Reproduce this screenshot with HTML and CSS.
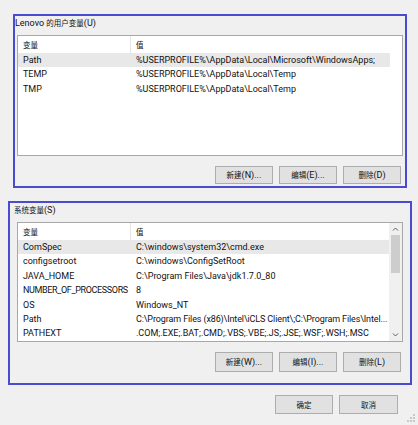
FILE: index.html
```html
<!DOCTYPE html>
<html lang="zh-CN">
<head>
<meta charset="utf-8">
<title>环境变量</title>
<link rel="stylesheet" href="styles.css">
</head>
<body>
<div class="win">
  <section class="grp grp-user">
    <div class="grp-title">Lenovo <span class="zh">的用户变量</span>(U)</div>
    <div class="list list-user">
      <div class="lv-body">
        <div class="lv-head"><span class="c1 zh">变量</span><span class="c2 zh">值</span></div>
        <div class="lv-row sel"><span class="c1">Path</span><span class="c2">%USERPROFILE%\AppData\Local\Microsoft\WindowsApps;</span></div>
        <div class="lv-row"><span class="c1">TEMP</span><span class="c2">%USERPROFILE%\AppData\Local\Temp</span></div>
        <div class="lv-row"><span class="c1">TMP</span><span class="c2">%USERPROFILE%\AppData\Local\Temp</span></div>
      </div>
    </div>
    <div class="btns">
      <button class="btn"><span class="zh">新建</span>(N)...</button>
      <button class="btn"><span class="zh">编辑</span>(E)...</button>
      <button class="btn"><span class="zh">删除</span>(D)</button>
    </div>
  </section>

  <section class="grp grp-sys">
    <div class="grp-title"><span class="zh">系统变量</span>(S)</div>
    <div class="list list-sys">
      <div class="lv-body">
        <div class="lv-head"><span class="c1 zh">变量</span><span class="c2 zh">值</span></div>
        <div class="lv-row sel"><span class="c1">ComSpec</span><span class="c2">C:\windows\system32\cmd.exe</span></div>
        <div class="lv-row"><span class="c1">configsetroot</span><span class="c2">C:\windows\ConfigSetRoot</span></div>
        <div class="lv-row"><span class="c1">JAVA_HOME</span><span class="c2">C:\Program Files\Java\jdk1.7.0_80</span></div>
        <div class="lv-row"><span class="c1 caps">NUMBER_OF_PROCESSORS</span><span class="c2">8</span></div>
        <div class="lv-row"><span class="c1">OS</span><span class="c2">Windows_NT</span></div>
        <div class="lv-row"><span class="c1">Path</span><span class="c2 tight">C:\Program Files (x86)\Intel\iCLS Client\;C:\Program Files\Intel...</span></div>
        <div class="lv-row"><span class="c1">PATHEXT</span><span class="c2">.COM;.EXE;.BAT;.CMD;.VBS;.VBE;.JS;.JSE;.WSF;.WSH;.MSC</span></div>
      </div>
      <div class="vscroll">
        <svg class="arrow" width="13" height="12" viewBox="0 0 13 12"><path d="M4 7.5 L6.5 5 L9 7.5" fill="none" stroke="#606060" stroke-width="1"/></svg>
        <div class="track"><div class="thumb"></div></div>
        <svg class="arrow" width="13" height="12" viewBox="0 0 13 12"><path d="M4 4.5 L6.5 7 L9 4.5" fill="none" stroke="#606060" stroke-width="1"/></svg>
      </div>
    </div>
    <div class="btns">
      <button class="btn btn-tall"><span class="zh">新建</span>(W)...</button>
      <button class="btn btn-tall"><span class="zh">编辑</span>(I)...</button>
      <button class="btn btn-tall"><span class="zh">删除</span>(L)</button>
    </div>
  </section>

  <div class="footer">
    <button class="btn btn-ok"><span class="zh">确定</span></button>
    <button class="btn btn-ok btn-cancel"><span class="zh">取消</span></button>
    <svg class="grip" width="8" height="8" viewBox="0 0 8 8">
      <rect x="6" y="0" width="2" height="2" fill="#c8c8c8"/>
      <rect x="3" y="3" width="2" height="2" fill="#c8c8c8"/>
      <rect x="6" y="3" width="2" height="2" fill="#c8c8c8"/>
      <rect x="0" y="6" width="2" height="2" fill="#c8c8c8"/>
      <rect x="3" y="6" width="2" height="2" fill="#c8c8c8"/>
      <rect x="6" y="6" width="2" height="2" fill="#c8c8c8"/>
    </svg>
  </div>
</div>
</body>
</html>
```

FILE: styles.css
```css
html, body {
  margin: 0;
  padding: 0;
}
body {
  width: 418px;
  height: 425px;
  overflow: hidden;
  background: #f0f0f0;
  font-family: Roboto, "Noto Sans CJK SC", sans-serif;
  font-size: 9px;
  color: #111;
}
.zh {
  font-family: "Noto Sans CJK SC", sans-serif;
  font-size: 7.5px;
}
.win {
  display: flex;
  flex-direction: column;
  width: 418px;
  height: 425px;
}
.grp {
  box-sizing: border-box;
  border: 2px solid #4b4bd2;
  display: flex;
  flex-direction: column;
}
.grp-user {
  margin: 14px 0 0 13px;
  width: 394px;
  height: 174px;
}
.grp-sys {
  margin: 13px 0 0 8px;
  width: 404px;
  height: 184px;
}
.grp-title {
  height: 14px;
  line-height: 14px;
  white-space: nowrap;
}
.grp-sys .grp-title { margin-left: 4px; }

.list {
  box-sizing: border-box;
  width: 386px;
  border: 1px solid #a8a8a8;
  background: #fff;
  margin-top: 5px;
  display: flex;
  overflow: hidden;
}
.list-user {
  margin-left: 2px;
  height: 121px;
}
.list-sys {
  margin-left: 7px;
  height: 120px;
}
.lv-body {
  flex: 1;
  min-width: 0;
}
.lv-head {
  display: flex;
  height: 17px;
  line-height: 17px;
}
.lv-head .c1 {
  border-right: 1px solid #e5e5e5;
}
.lv-row {
  display: flex;
  width: 372px;
  height: 14.4px;
  line-height: 14.4px;
  white-space: nowrap;
}
.lv-row.sel {
  background: #e8e8e8;
}
.c1 {
  box-sizing: border-box;
  width: 113px;
  flex: none;
  padding-left: 5px;
  overflow: hidden;
}
.c1.caps {
  letter-spacing: -0.35px;
}
.c2 {
  padding-left: 5px;
  white-space: nowrap;
}
.c2.tight {
  letter-spacing: -0.12px;
}

.vscroll {
  width: 13px;
  flex: none;
  background: #f0f0f0;
  display: flex;
  flex-direction: column;
}
.arrow {
  display: block;
  flex: none;
}
.track {
  flex: 1;
  padding: 0 2px;
}
.thumb {
  height: 38px;
  background: #cdcdcd;
}

.btns {
  display: flex;
  justify-content: flex-end;
  gap: 6px;
  margin-top: 10px;
}
.grp-user .btns { padding-right: 4px; }
.grp-sys .btns { padding-right: 9px; }

.btn {
  box-sizing: border-box;
  width: 58px;
  height: 18px;
  margin: 0;
  padding: 0;
  border: 1px solid #adadad;
  background: #e1e1e1;
  font-family: Roboto, "Noto Sans CJK SC", sans-serif;
  font-size: 9px;
  color: #111;
  line-height: 16px;
}
.btn-tall {
  height: 20px;
}
.footer {
  display: flex;
  justify-content: flex-end;
  align-items: flex-start;
  gap: 6px;
  margin-top: 10px;
  padding-right: 3px;
}
.btn-ok {
  height: 19px;
}
.btn-cancel {
  width: 59px;
}
.grip {
  display: block;
  margin-top: 19px;
  margin-left: 3px;
}
```
